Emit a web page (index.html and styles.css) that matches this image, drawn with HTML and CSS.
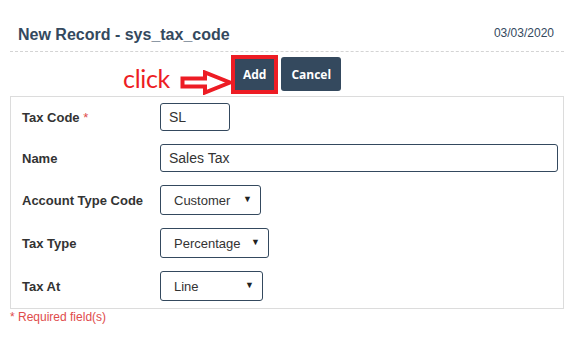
FILE: index.html
```html
<!DOCTYPE html>
<html>
<head>
	<meta charset="utf-8"/>
	<title>New Record - sys_tax_code</title>
	<link rel="stylesheet" href="styles.css">
</head>
<body>
	<div class="page">
		<div class="header">
			<h2 class="title">New Record - sys_tax_code</h2>
			<span class="date">03/03/2020</span>
		</div>

		<div class="actions">
			<span class="hint-text">click</span>
			<svg class="hint-arrow" width="54" height="25" viewBox="0 0 54 25">
				<path d="M2.5 8.5 H25 V2.5 L50 12.5 L25 22.5 V16.5 H2.5 Z" fill="#fff" stroke="#ed1c24" stroke-width="4" stroke-linejoin="miter"/>
			</svg>
			<span class="marked">
				<button class="btn" type="button">Add</button>
			</span>
			<button class="btn" type="button">Cancel</button>
		</div>

		<form class="record">
			<label class="field-label" for="taxCode">Tax Code <span class="req">*</span></label>
			<div><input id="taxCode" class="input short" type="text" value="SL"/></div>

			<label class="field-label" for="name">Name</label>
			<div><input id="name" class="input wide" type="text" value="Sales Tax"/></div>

			<label class="field-label" for="accType">Account Type Code</label>
			<div>
				<span class="select-wrap w-account">
					<select id="accType" class="select"><option>Customer</option></select>
				</span>
			</div>

			<label class="field-label" for="taxType">Tax Type</label>
			<div>
				<span class="select-wrap w-type">
					<select id="taxType" class="select"><option>Percentage</option></select>
				</span>
			</div>

			<label class="field-label" for="taxAt">Tax At</label>
			<div>
				<span class="select-wrap w-at">
					<select id="taxAt" class="select"><option>Line</option></select>
				</span>
			</div>
		</form>
		<div class="note">* Required field(s)</div>
	</div>
</body>
</html>
```

FILE: styles.css
```css
body {
	margin: 0;
	font-family: "Liberation Sans", Arial, sans-serif;
	color: #333;
	background: #fff;
}
.page {
	padding: 26px 16px 0 10px;
}
.header {
	display: flex;
	justify-content: space-between;
	align-items: flex-start;
	padding: 0 10px 7px 8px;
	border-bottom: 1px dashed #d4d4d4;
}
.title {
	margin: 0;
	font-size: 16px;
	line-height: 18px;
	font-weight: bold;
	color: #34495e;
}
.date {
	font-size: 12px;
	line-height: 14px;
	color: #34495e;
}
.actions {
	position: relative;
	display: flex;
	justify-content: center;
	gap: 5px;
	padding: 5px 0 5px 0;
}
.btn {
	height: 34px;
	padding: 0 10px;
	border: 0;
	border-radius: 3px;
	background: #34495e;
	color: #fff;
	font-family: "Open Sans", "Liberation Sans", sans-serif;
	font-size: 12px;
	font-weight: 700;
}
.marked {
	position: relative;
}
.marked::after {
	content: "";
	position: absolute;
	left: -2px;
	right: -2px;
	top: -2px;
	bottom: -3px;
	border: 4px solid #ed1c24;
}
.hint-text {
	position: absolute;
	left: 113px;
	top: 11px;
	font-family: Lato, "Open Sans", sans-serif;
	font-size: 25px;
	line-height: 30px;
	letter-spacing: -0.3px;
	color: #ed1c24;
}
.hint-arrow {
	position: absolute;
	left: 170px;
	top: 18px;
}
.record {
	display: grid;
	grid-template-columns: 138px 1fr;
	row-gap: 13px;
	align-items: center;
	margin: 0;
	padding: 6px 5px 7px 11px;
	border: 1px solid #dcdcdc;
}
.field-label {
	font-size: 13px;
	font-weight: bold;
	color: #333;
}
.req {
	color: #e04b4b;
	font-weight: normal;
}
.input {
	box-sizing: border-box;
	height: 28px;
	padding: 0 8px;
	border: 1px solid #34495e;
	border-radius: 3px;
	font-family: "Liberation Sans", Arial, sans-serif;
	font-size: 14px;
	color: #333;
}
.short {
	width: 70px;
}
.wide {
	width: 100%;
	display: block;
}
.select-wrap {
	position: relative;
	display: inline-block;
}
.select-wrap::after {
	content: "\25BC";
	position: absolute;
	right: 9px;
	top: 9px;
	font-size: 9px;
	color: #222;
	pointer-events: none;
}
.select {
	-webkit-appearance: none;
	appearance: none;
	box-sizing: border-box;
	width: 100%;
	height: 30px;
	padding: 0 13px;
	border: 1px solid #34495e;
	border-radius: 3px;
	background: #fff;
	font-family: "Liberation Sans", Arial, sans-serif;
	font-size: 13px;
	color: #333;
	display: block;
}
.w-account {
	width: 101px;
}
.w-type {
	width: 109px;
}
.w-at {
	width: 103px;
}
.note {
	padding-top: 1px;
	font-size: 12px;
	line-height: 14px;
	color: #e04b4b;
}
```
